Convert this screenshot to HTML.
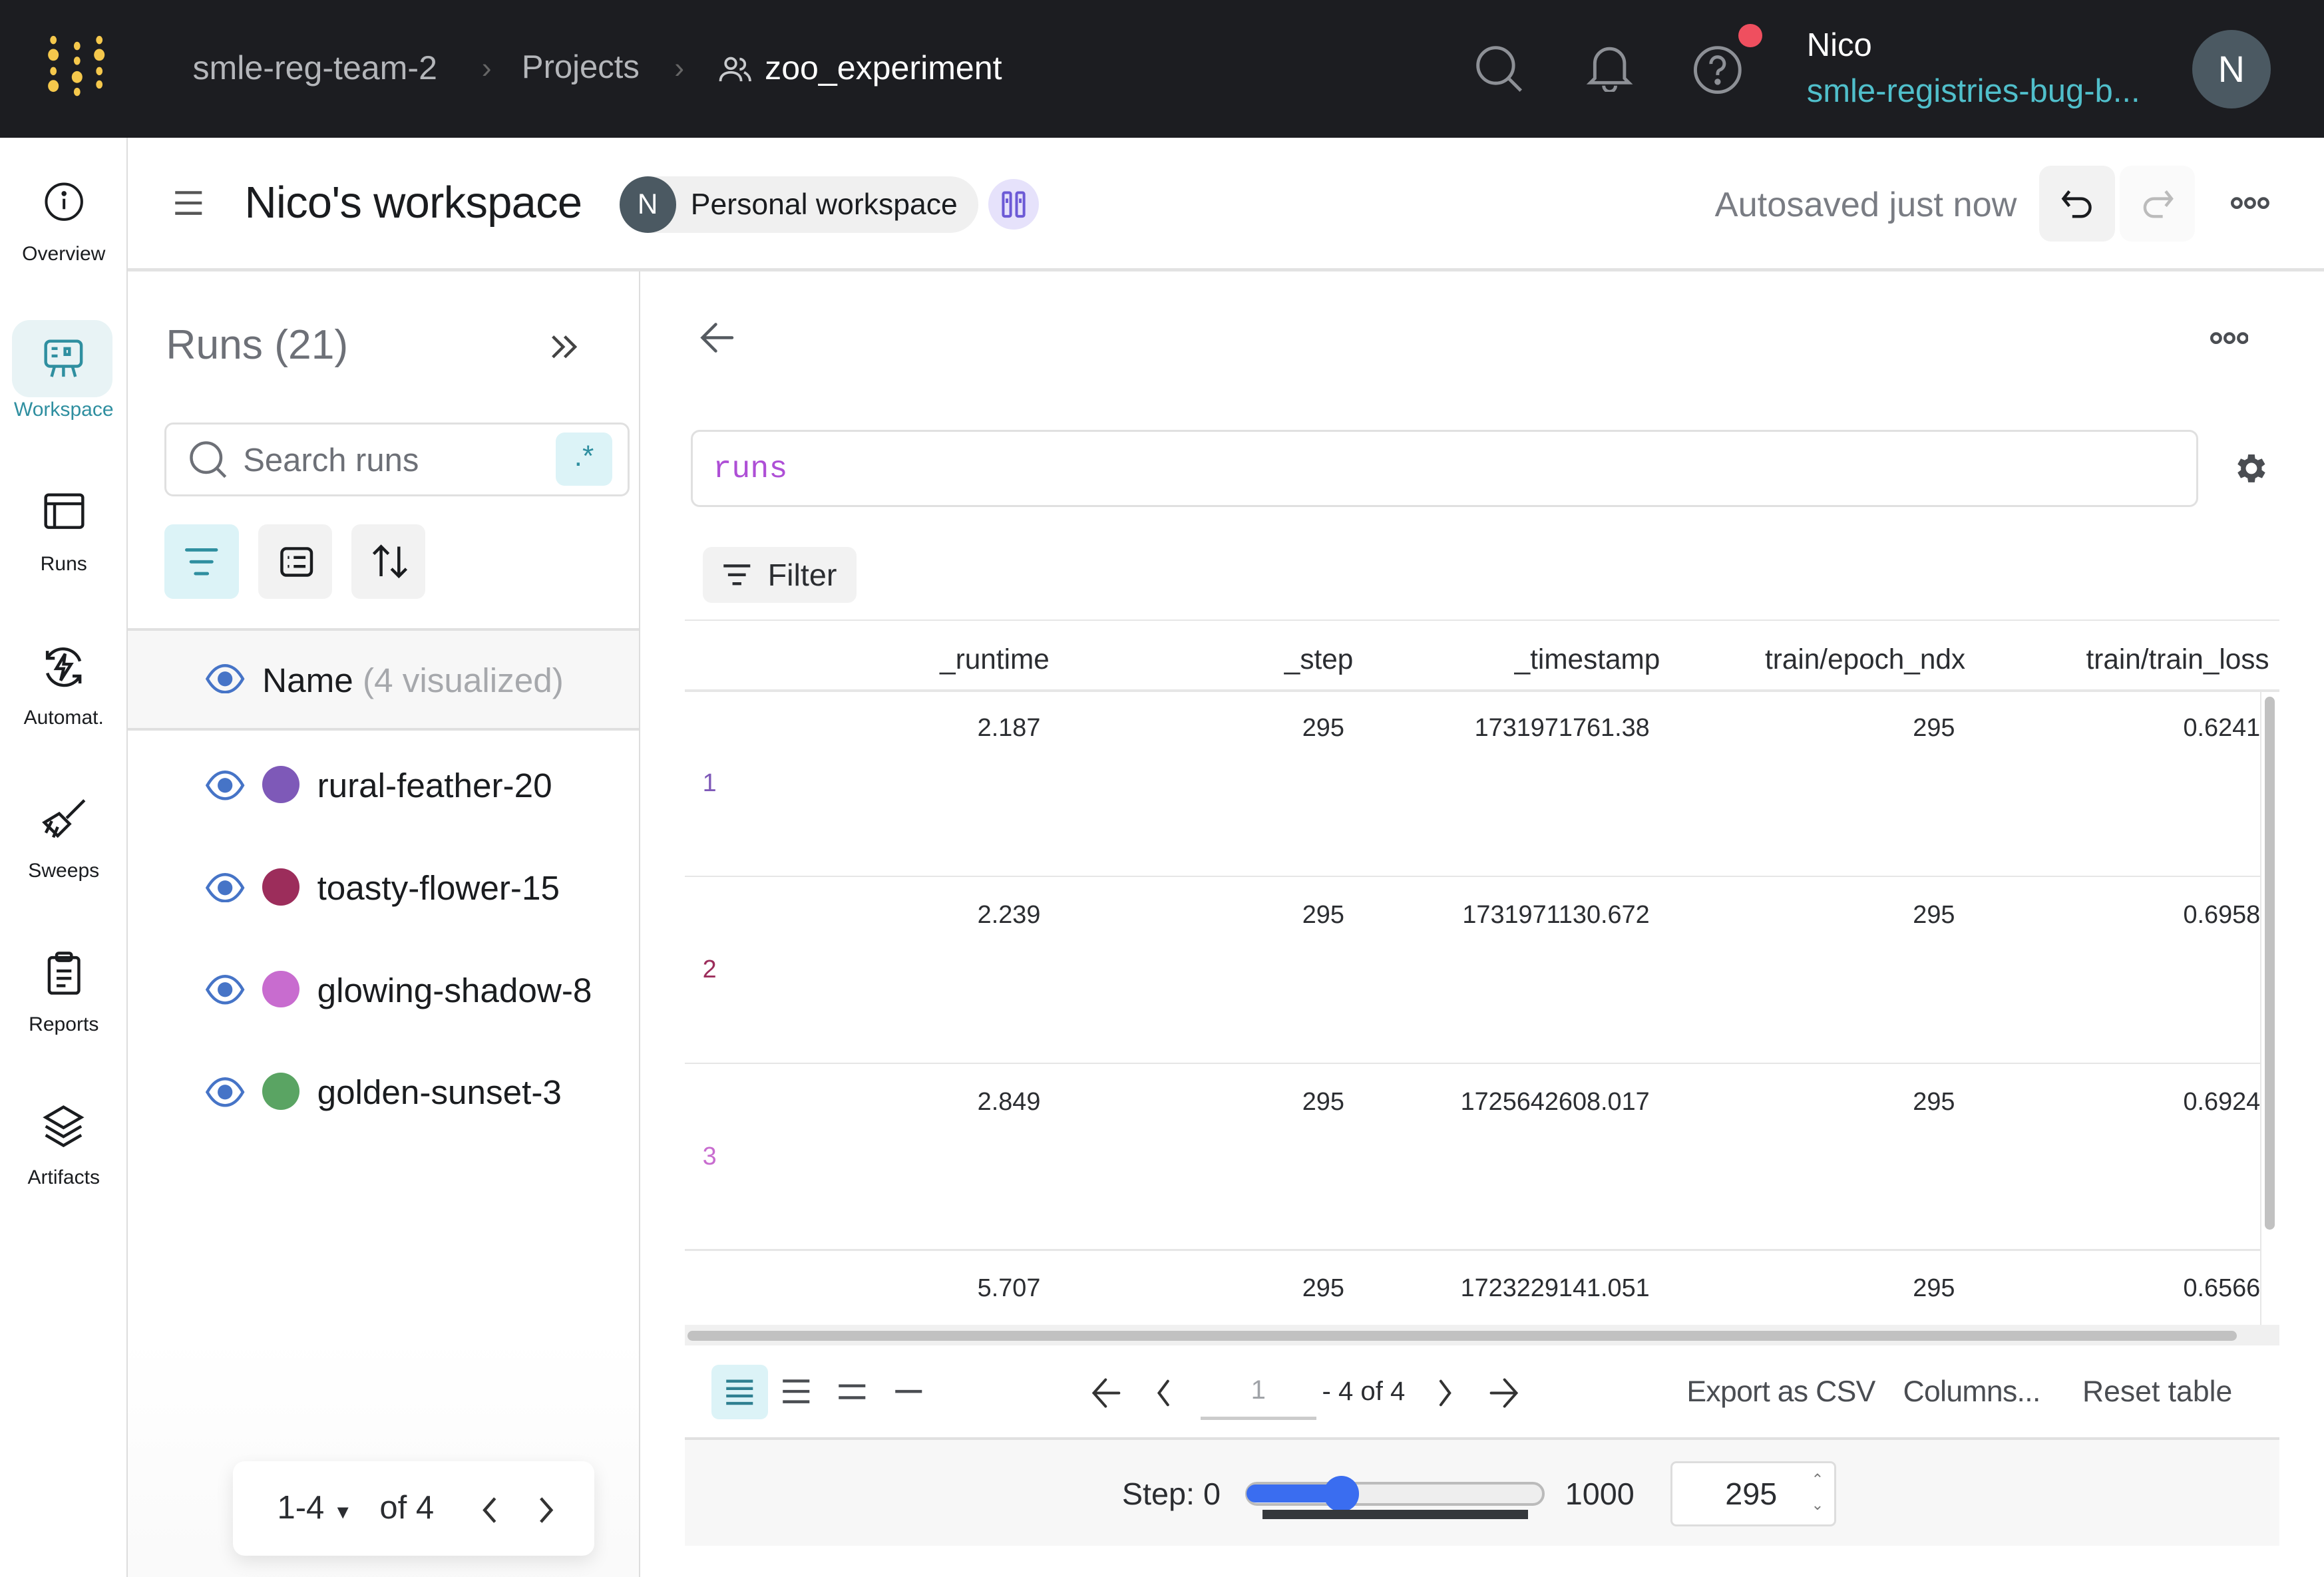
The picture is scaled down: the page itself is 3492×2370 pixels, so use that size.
<!DOCTYPE html>
<html><head><meta charset="utf-8"><style>
*{box-sizing:border-box;margin:0;padding:0}
html,body{width:3492px;height:2370px;overflow:hidden;background:#fff}
#w{width:1568px;height:1064px;zoom:2.22704;position:relative;font-family:"Liberation Sans",sans-serif;color:#1a1c1f;overflow:hidden}
.a{position:absolute}
.top{left:0;top:0;width:1568px;height:93px;background:#1c1d21}
.nav{left:0;top:93px;width:86px;height:971px;border-right:1px solid #ddd;background:#fff}
.ni{position:absolute;left:0;width:86px;text-align:center;font-size:13.5px;color:#1a1c1f}
.ni svg{display:block;margin:0 auto 8px}
.cell{position:absolute;font-size:17px;color:#2b2d31;text-align:right}
</style></head><body><div id="w">
<div class="a top"></div>
<!-- logo -->
<svg class="a" style="left:0;top:0" width="90" height="90" viewBox="0 0 90 90">
<g fill="#f5c84c">
<ellipse cx="36" cy="27" rx="2.2" ry="2.8"/><ellipse cx="36" cy="37" rx="3.6" ry="4"/><ellipse cx="36" cy="48" rx="2.2" ry="2.8"/><ellipse cx="36" cy="58" rx="3.6" ry="4"/>
<ellipse cx="52" cy="31" rx="2.2" ry="2.8"/><ellipse cx="52" cy="41" rx="2.2" ry="2.8"/><ellipse cx="52" cy="52" rx="3.6" ry="4"/><ellipse cx="52" cy="62" rx="2.2" ry="2.8"/>
<ellipse cx="67" cy="27" rx="2.2" ry="2.8"/><ellipse cx="67" cy="37" rx="3.6" ry="4"/><ellipse cx="67" cy="48" rx="2.2" ry="2.8"/><ellipse cx="67" cy="57" rx="2.2" ry="2.8"/>
</g></svg>
<div class="a" style="left:130px;top:33px;font-size:22.5px;color:#b4b6ba">smle-reg-team-2</div>
<div class="a" style="left:325px;top:35px;font-size:20px;color:#666">›</div>
<div class="a" style="left:352px;top:33px;font-size:22px;color:#b4b6ba">Projects</div>
<div class="a" style="left:455px;top:35px;font-size:20px;color:#666">›</div>
<svg class="a" style="left:484px;top:37px" width="24" height="20" viewBox="0 0 24 20" fill="none" stroke="#c8cacd" stroke-width="1.7"><circle cx="9" cy="6" r="3.5"/><path d="M2 18c0-4 3-6 7-6s7 2 7 6"/><path d="M15 3a3.5 3.5 0 0 1 0 7M18 12c2 1 4 3 4 6"/></svg>
<div class="a" style="left:516px;top:33px;font-size:22.5px;color:#fff">zoo_experiment</div>
<svg class="a" style="left:994px;top:29px" width="34" height="34" viewBox="0 0 34 34" fill="none" stroke="#8d9096" stroke-width="2.2"><circle cx="15" cy="15" r="12"/><path d="M24 24l8 8"/></svg>
<svg class="a" style="left:1070px;top:28px" width="32" height="34" viewBox="0 0 32 34" fill="none" stroke="#8d9096" stroke-width="2.2"><path d="M6 25V15a10 10 0 0 1 20 0v10l3 3H3z"/><path d="M12 30a4 4 0 0 0 8 0"/></svg>
<svg class="a" style="left:1142px;top:29px" width="36" height="36" viewBox="0 0 36 36" fill="none" stroke="#8d9096" stroke-width="2.2"><circle cx="17" cy="18" r="15"/><path d="M12.5 14a4.5 4.5 0 1 1 6 4c-1.5.7-1.5 2-1.5 3.5"/><circle cx="17" cy="26" r="1" fill="#8d9096"/></svg>
<div class="a" style="left:1173px;top:16px;width:16px;height:16px;border-radius:50%;background:#ef4f5f"></div>
<div class="a" style="left:1219px;top:18px;font-size:22px;color:#fff">Nico</div>
<div class="a" style="left:1219px;top:49px;font-size:22px;color:#50bfcb">smle-registries-bug-b...</div>
<div class="a" style="left:1479px;top:20px;width:53px;height:53px;border-radius:50%;background:#4b5962;color:#fff;font-size:25px;text-align:center;line-height:53px">N</div>

<!-- nav -->
<div class="a nav"></div>
<div class="ni" style="top:122px"><svg width="28" height="28" viewBox="0 0 28 28" fill="none" stroke="#1a1c1f" stroke-width="1.8"><circle cx="14" cy="14" r="12"/><path d="M14 12v7"/><circle cx="14" cy="8.5" r="0.8" fill="#1a1c1f"/></svg><span style="position:relative;top:6px">Overview</span></div>
<div class="a" style="left:8px;top:216px;width:68px;height:52px;border-radius:12px;background:#e8f3f5"></div>
<div class="ni" style="top:227px;color:#2f8fa0"><svg width="30" height="30" viewBox="0 0 30 30" fill="none" stroke="#2f8fa0" stroke-width="2"><rect x="3" y="3" width="24" height="17" rx="3"/><path d="M7 8h4M7 13h4M16 8h3v4h-3zM9 20l-2 7M15 20v7M21 20l2 7"/></svg><span style="position:relative;top:4px">Workspace</span></div>
<div class="ni" style="top:331px"><svg width="30" height="28" viewBox="0 0 30 28" fill="none" stroke="#1a1c1f" stroke-width="2"><rect x="3" y="3" width="25" height="22" rx="2"/><path d="M3 9h25M9 9v16"/></svg><span style="position:relative;top:6px">Runs</span></div>
<div class="ni" style="top:434px"><svg width="32" height="32" viewBox="0 0 32 32" fill="none" stroke="#1a1c1f" stroke-width="2"><path d="M5 10a12 12 0 0 1 22 2M27 22a12 12 0 0 1-22-2"/><path d="M5 5v5h5M27 27v-5h-5"/><path d="M17 7l-6 10h5l-2 8 7-11h-5z"/></svg><span style="position:relative;top:3px">Automat.</span></div>
<div class="ni" style="top:537px"><svg width="32" height="32" viewBox="0 0 32 32" fill="none" stroke="#1a1c1f" stroke-width="2"><path d="M30 3L18 15M13 12l7 7-8 8-9-9zM8 17l-4 8M12 21l-3 7"/></svg><span style="position:relative;top:3px">Sweeps</span></div>
<div class="ni" style="top:641px"><svg width="28" height="32" viewBox="0 0 28 32" fill="none" stroke="#1a1c1f" stroke-width="2"><rect x="4" y="5" width="20" height="24" rx="2"/><rect x="9" y="2" width="10" height="5" rx="1.5"/><path d="M9 14h10M9 19h10M9 24h6"/></svg><span style="position:relative;top:3px">Reports</span></div>
<div class="ni" style="top:744px"><svg width="30" height="32" viewBox="0 0 30 32" fill="none" stroke="#1a1c1f" stroke-width="2"><path d="M15 3L3 10l12 7 12-7zM3 16l12 7 12-7M3 22l12 7 12-7"/></svg><span style="position:relative;top:3px">Artifacts</span></div>

<!-- header row -->
<div class="a" style="left:86px;top:181px;width:1482px;height:2px;background:#e2e2e2"></div>
<svg class="a" style="left:117px;top:128px" width="20" height="18" viewBox="0 0 20 18" stroke="#555" stroke-width="2"><path d="M1 2h18M1 9h18M1 16h18"/></svg>
<div class="a" style="left:165px;top:120px;font-size:30px;color:#1a1c1f;letter-spacing:-0.3px">Nico's workspace</div>
<div class="a" style="left:418px;top:119px;width:242px;height:38px;border-radius:19px;background:#f0f0f0"></div>
<div class="a" style="left:418px;top:119px;width:38px;height:38px;border-radius:50%;background:#4b5962;color:#fff;font-size:19px;text-align:center;line-height:38px">N</div>
<div class="a" style="left:466px;top:127px;font-size:20px;color:#1a1c1f">Personal workspace</div>
<div class="a" style="left:667px;top:121px;width:34px;height:34px;border-radius:50%;background:#e6e2fb"></div>
<svg class="a" style="left:675px;top:128px" width="18" height="20" viewBox="0 0 18 20" fill="none" stroke="#6c5ad6" stroke-width="1.8"><rect x="2" y="2" width="5" height="16" rx="1"/><rect x="11" y="2" width="5" height="16" rx="1"/><path d="M4.5 6v3M13.5 6v3"/></svg>
<div class="a" style="left:1157px;top:125px;font-size:23.5px;color:#797c83">Autosaved just now</div>
<div class="a" style="left:1376px;top:112px;width:51px;height:51px;border-radius:8px;background:#f2f2f2"></div>
<svg class="a" style="left:1390px;top:127px" width="24" height="22" viewBox="0 0 24 22" fill="none" stroke="#1a1c1f" stroke-width="2"><path d="M6 2L2 7l4 5M2 7h12a6 6 0 0 1 0 12H8"/></svg>
<div class="a" style="left:1430px;top:112px;width:51px;height:51px;border-radius:8px;background:#fafafa"></div>
<svg class="a" style="left:1443px;top:127px" width="24" height="22" viewBox="0 0 24 22" fill="none" stroke="#bbb" stroke-width="2"><path d="M18 2l4 5-4 5M22 7H10a6 6 0 0 0 0 12h6"/></svg>
<svg class="a" style="left:1505px;top:132px" width="26" height="10" viewBox="0 0 26 10" fill="none" stroke="#4a4d52" stroke-width="2"><circle cx="4" cy="5" r="3"/><circle cx="13" cy="5" r="3"/><circle cx="22" cy="5" r="3"/></svg>

<!-- runs panel -->
<div class="a" style="left:86px;top:183px;width:345px;height:881px;background:linear-gradient(#fff 0,#fff 720px,#f9f9f9 900px)"></div>
<div class="a" style="left:431px;top:183px;width:1px;height:881px;background:#ddd"></div>
<div class="a" style="left:112px;top:217px;font-size:28px;color:#6d7077">Runs (21)</div>
<svg class="a" style="left:370px;top:224px" width="22" height="20" viewBox="0 0 22 20" fill="none" stroke="#444" stroke-width="2"><path d="M3 3l7 7-7 7M11 3l7 7-7 7"/></svg>
<div class="a" style="left:111px;top:285px;width:314px;height:50px;border:1.5px solid #e0e0e0;border-radius:6px;background:#fff"></div>
<svg class="a" style="left:127px;top:297px" width="28" height="28" viewBox="0 0 28 28" fill="none" stroke="#6d7077" stroke-width="2"><circle cx="12" cy="12" r="10"/><path d="M19 19l6 6"/></svg>
<div class="a" style="left:164px;top:298px;font-size:22px;color:#6d7077">Search runs</div>
<div class="a" style="left:375px;top:292px;width:38px;height:36px;border-radius:6px;background:#dcf3f7;color:#2f8fa0;font-size:20px;text-align:center;line-height:32px">.*</div>
<div class="a" style="left:111px;top:354px;width:50px;height:50px;border-radius:6px;background:#dcf3f7"></div>
<svg class="a" style="left:124px;top:369px" width="24" height="20" viewBox="0 0 24 20" stroke="#2f8fa0" stroke-width="2.2" stroke-linecap="round"><path d="M2 2h20M5 10h14M8 18h8"/></svg>
<div class="a" style="left:174px;top:354px;width:50px;height:50px;border-radius:6px;background:#f2f2f2"></div>
<svg class="a" style="left:188px;top:368px" width="24" height="22" viewBox="0 0 24 22" fill="none" stroke="#1a1c1f" stroke-width="2"><rect x="2" y="2" width="20" height="18" rx="3"/><path d="M6 8h1M6 14h1M10 8h8M10 14h8"/></svg>
<div class="a" style="left:237px;top:354px;width:50px;height:50px;border-radius:6px;background:#f2f2f2"></div>
<svg class="a" style="left:250px;top:367px" width="26" height="24" viewBox="0 0 26 24" fill="none" stroke="#1a1c1f" stroke-width="2"><path d="M7 22V2M2 7l5-5 5 5M19 2v20M14 17l5 5 5-5"/></svg>
<div class="a" style="left:86px;top:424px;width:345px;height:69px;background:#f7f7f7;border-top:2px solid #e0e0e0;border-bottom:2px solid #e0e0e0"></div>
<svg class="a" style="left:138px;top:448px" width="28" height="20" viewBox="0 0 28 20"><path d="M2 10C6 3 10 1 14 1s8 2 12 9c-4 7-8 9-12 9S6 17 2 10z" fill="none" stroke="#4674c7" stroke-width="2"/><circle cx="14" cy="10" r="5" fill="#4674c7"/></svg>
<div class="a" style="left:177px;top:446px;font-size:23px;color:#1a1c1f">Name <span style="color:#a6a8ac">(4 visualized)</span></div>
<svg class="a" style="left:138px;top:520px" width="28" height="20" viewBox="0 0 28 20"><path d="M2 10C6 3 10 1 14 1s8 2 12 9c-4 7-8 9-12 9S6 17 2 10z" fill="none" stroke="#4674c7" stroke-width="2"/><circle cx="14" cy="10" r="5" fill="#4674c7"/></svg>
<div class="a" style="left:177px;top:517px;width:25px;height:25px;border-radius:50%;background:#7e59b8"></div>
<div class="a" style="left:214px;top:517px;font-size:23px">rural-feather-20</div>
<svg class="a" style="left:138px;top:589px" width="28" height="20" viewBox="0 0 28 20"><path d="M2 10C6 3 10 1 14 1s8 2 12 9c-4 7-8 9-12 9S6 17 2 10z" fill="none" stroke="#4674c7" stroke-width="2"/><circle cx="14" cy="10" r="5" fill="#4674c7"/></svg>
<div class="a" style="left:177px;top:586px;width:25px;height:25px;border-radius:50%;background:#9c2d5b"></div>
<div class="a" style="left:214px;top:586px;font-size:23px">toasty-flower-15</div>
<svg class="a" style="left:138px;top:658px" width="28" height="20" viewBox="0 0 28 20"><path d="M2 10C6 3 10 1 14 1s8 2 12 9c-4 7-8 9-12 9S6 17 2 10z" fill="none" stroke="#4674c7" stroke-width="2"/><circle cx="14" cy="10" r="5" fill="#4674c7"/></svg>
<div class="a" style="left:177px;top:655px;width:25px;height:25px;border-radius:50%;background:#c86ccf"></div>
<div class="a" style="left:214px;top:655px;font-size:23px">glowing-shadow-8</div>
<svg class="a" style="left:138px;top:727px" width="28" height="20" viewBox="0 0 28 20"><path d="M2 10C6 3 10 1 14 1s8 2 12 9c-4 7-8 9-12 9S6 17 2 10z" fill="none" stroke="#4674c7" stroke-width="2"/><circle cx="14" cy="10" r="5" fill="#4674c7"/></svg>
<div class="a" style="left:177px;top:724px;width:25px;height:25px;border-radius:50%;background:#5aa463"></div>
<div class="a" style="left:214px;top:724px;font-size:23px">golden-sunset-3</div>
<div class="a" style="left:157px;top:986px;width:244px;height:64px;border-radius:8px;background:#fff;box-shadow:0 4px 12px rgba(0,0,0,.1)"></div>
<div class="a" style="left:187px;top:1005px;font-size:22px;color:#2b2d31">1-4 <span style="font-size:13px">▼</span>&nbsp;&nbsp; of 4</div>
<svg class="a" style="left:322px;top:1008px" width="60" height="22" viewBox="0 0 60 22" fill="none" stroke="#333" stroke-width="2"><path d="M12 3L5 11l7 8M43 3l7 8-7 8"/></svg>

<!-- main -->
<svg class="a" style="left:472px;top:217px" width="24" height="22" viewBox="0 0 24 22" fill="none" stroke="#555a60" stroke-width="2" stroke-linecap="round"><path d="M11 2L2 11l9 9M2 11h20"/></svg>
<svg class="a" style="left:1491px;top:223px" width="26" height="10" viewBox="0 0 26 10" fill="none" stroke="#4a4d52" stroke-width="2"><circle cx="4" cy="5" r="3"/><circle cx="13" cy="5" r="3"/><circle cx="22" cy="5" r="3"/></svg>
<div class="a" style="left:466px;top:290px;width:1017px;height:52px;border:1.5px solid #e0e0e0;border-radius:6px"></div>
<div class="a" style="left:481px;top:305px;font-family:'Liberation Mono',monospace;font-size:21px;color:#ae4fd6">runs</div>
<svg class="a" style="left:1506px;top:303px" width="26" height="26" viewBox="0 0 24 24"><path fill="#4a4d52" d="M19.4 13a7.5 7.5 0 0 0 0-2l2.1-1.6-2-3.5-2.5 1a7 7 0 0 0-1.7-1L15 3.3h-4l-.4 2.6a7 7 0 0 0-1.7 1l-2.5-1-2 3.5L6.5 11a7.5 7.5 0 0 0 0 2l-2.1 1.6 2 3.5 2.5-1a7 7 0 0 0 1.7 1l.4 2.6h4l.4-2.6a7 7 0 0 0 1.7-1l2.5 1 2-3.5zM13 15.5a3.5 3.5 0 1 1 0-7 3.5 3.5 0 0 1 0 7z" transform="translate(-1 0)"/></svg>
<div class="a" style="left:474px;top:369px;width:104px;height:38px;border-radius:6px;background:#f2f2f2"></div>
<svg class="a" style="left:487px;top:380px" width="20" height="16" viewBox="0 0 20 16" stroke="#2b2d31" stroke-width="2"><path d="M1 2h18M4 8h12M7 14h6"/></svg>
<div class="a" style="left:518px;top:376px;font-size:21px;color:#2b2d31">Filter</div>
<div class="a" style="left:462px;top:418px;width:1076px;height:1px;background:#e6e6e6"></div>
<div class="a" style="left:462px;top:465px;width:1076px;height:2px;background:#e6e6e6"></div>
<div class="cell" style="left:500px;width:208px;top:434px;font-size:19px">_runtime</div>
<div class="cell" style="left:700px;width:213px;top:434px;font-size:19px">_step</div>
<div class="cell" style="left:900px;width:220px;top:434px;font-size:19px">_timestamp</div>
<div class="cell" style="left:1100px;width:226px;top:434px;font-size:19px">train/epoch_ndx</div>
<div class="cell" style="left:1300px;width:231px;top:434px;font-size:19px">train/train_loss</div>

<div class="cell" style="left:500px;width:202px;top:482px">2.187</div><div class="cell" style="left:700px;width:207px;top:482px">295</div><div class="cell" style="left:900px;width:213px;top:482px">1731971761.38</div><div class="cell" style="left:1100px;width:219px;top:482px">295</div><div class="cell" style="left:1300px;width:225px;top:482px">0.6241</div>
<div class="a" style="left:474px;top:519px;font-size:17px;color:#7e59b8">1</div>
<div class="a" style="left:462px;top:591px;width:1064px;height:1px;background:#e6e6e6"></div>
<div class="cell" style="left:500px;width:202px;top:608px">2.239</div><div class="cell" style="left:700px;width:207px;top:608px">295</div><div class="cell" style="left:900px;width:213px;top:608px">1731971130.672</div><div class="cell" style="left:1100px;width:219px;top:608px">295</div><div class="cell" style="left:1300px;width:225px;top:608px">0.6958</div>
<div class="a" style="left:474px;top:645px;font-size:17px;color:#9c2d5b">2</div>
<div class="a" style="left:462px;top:717px;width:1064px;height:1px;background:#e6e6e6"></div>
<div class="cell" style="left:500px;width:202px;top:734px">2.849</div><div class="cell" style="left:700px;width:207px;top:734px">295</div><div class="cell" style="left:900px;width:213px;top:734px">1725642608.017</div><div class="cell" style="left:1100px;width:219px;top:734px">295</div><div class="cell" style="left:1300px;width:225px;top:734px">0.6924</div>
<div class="a" style="left:474px;top:771px;font-size:17px;color:#c86ccf">3</div>
<div class="a" style="left:462px;top:843px;width:1064px;height:1px;background:#e6e6e6"></div>
<div class="cell" style="left:500px;width:202px;top:860px">5.707</div><div class="cell" style="left:700px;width:207px;top:860px">295</div><div class="cell" style="left:900px;width:213px;top:860px">1723229141.051</div><div class="cell" style="left:1100px;width:219px;top:860px">295</div><div class="cell" style="left:1300px;width:225px;top:860px">0.6566</div>
<div class="a" style="left:1525px;top:466px;width:1px;height:428px;background:#e6e6e6"></div>
<div class="a" style="left:1528px;top:470px;width:7px;height:360px;border-radius:4px;background:#c1c1c1"></div>
<div class="a" style="left:462px;top:894px;width:1076px;height:14px;background:#f0f0f0"></div>
<div class="a" style="left:464px;top:898px;width:1045px;height:7px;border-radius:4px;background:#c1c1c1"></div>

<!-- toolbar -->
<div class="a" style="left:480px;top:921px;width:38px;height:37px;border-radius:5px;background:#dcf3f7"></div>
<svg class="a" style="left:489px;top:929px" width="20" height="20" viewBox="0 0 20 20" stroke="#2f8091" stroke-width="2"><path d="M1 3h18M1 8h18M1 13h18M1 18h18"/></svg>
<svg class="a" style="left:527px;top:930px" width="20" height="18" viewBox="0 0 20 18" stroke="#4a4d52" stroke-width="2"><path d="M1 2h18M1 9h18M1 16h18"/></svg>
<svg class="a" style="left:565px;top:932px" width="20" height="14" viewBox="0 0 20 14" stroke="#4a4d52" stroke-width="2"><path d="M1 3h18M1 11h18"/></svg>
<svg class="a" style="left:603px;top:934px" width="20" height="10" viewBox="0 0 20 10" stroke="#4a4d52" stroke-width="2"><path d="M1 5h18"/></svg>
<svg class="a" style="left:736px;top:929px" width="60" height="22" viewBox="0 0 60 22" fill="none" stroke="#333" stroke-width="1.8" stroke-linecap="round"><path d="M10 2L2 11l8 9M2 11h17M52 3l-6 8 6 8"/></svg>
<div class="a" style="left:810px;top:928px;width:78px;text-align:center;font-size:18px;color:#a0a3a8">1</div>
<div class="a" style="left:810px;top:956px;width:78px;height:2px;background:#ccc"></div>
<div class="a" style="left:892px;top:929px;font-size:18px;color:#2b2d31">- 4 of 4</div>
<svg class="a" style="left:968px;top:929px" width="60" height="22" viewBox="0 0 60 22" fill="none" stroke="#333" stroke-width="1.8" stroke-linecap="round"><path d="M4 3l6 8-6 8M38 11h17M47 2l8 9-8 9"/></svg>
<div class="a" style="left:1138px;top:928px;font-size:20px;color:#4a4d52;letter-spacing:-0.3px">Export as CSV</div>
<div class="a" style="left:1284px;top:928px;font-size:20px;color:#4a4d52;letter-spacing:-0.3px">Columns...</div>
<div class="a" style="left:1405px;top:928px;font-size:20px;color:#4a4d52">Reset table</div>
<div class="a" style="left:462px;top:970px;width:1076px;height:73px;background:#f7f7f7;border-top:2px solid #e0e0e0"></div>
<div class="a" style="left:757px;top:996px;font-size:21px;color:#2b2d31">Step: 0</div>
<div class="a" style="left:840px;top:1000px;width:202px;height:16px;border-radius:8px;background:#eee;border:2px solid #bbb"></div>
<div class="a" style="left:841px;top:1002px;width:64px;height:12px;border-radius:6px 0 0 6px;background:#3a6df0"></div>
<div class="a" style="left:893px;top:996px;width:24px;height:24px;border-radius:50%;background:#3a6df0"></div>
<div class="a" style="left:852px;top:1019px;width:179px;height:6px;background:#35383c"></div>
<div class="a" style="left:1056px;top:996px;font-size:21px;color:#2b2d31">1000</div>
<div class="a" style="left:1127px;top:986px;width:112px;height:44px;border:1.5px solid #ddd;border-radius:4px;background:#fff"></div>
<div class="a" style="left:1164px;top:996px;font-size:21px;color:#2b2d31">295</div>
<div class="a" style="left:1222px;top:990px;font-size:10px;color:#777;line-height:17px">⌃<br>⌄</div>
</div></body></html>
